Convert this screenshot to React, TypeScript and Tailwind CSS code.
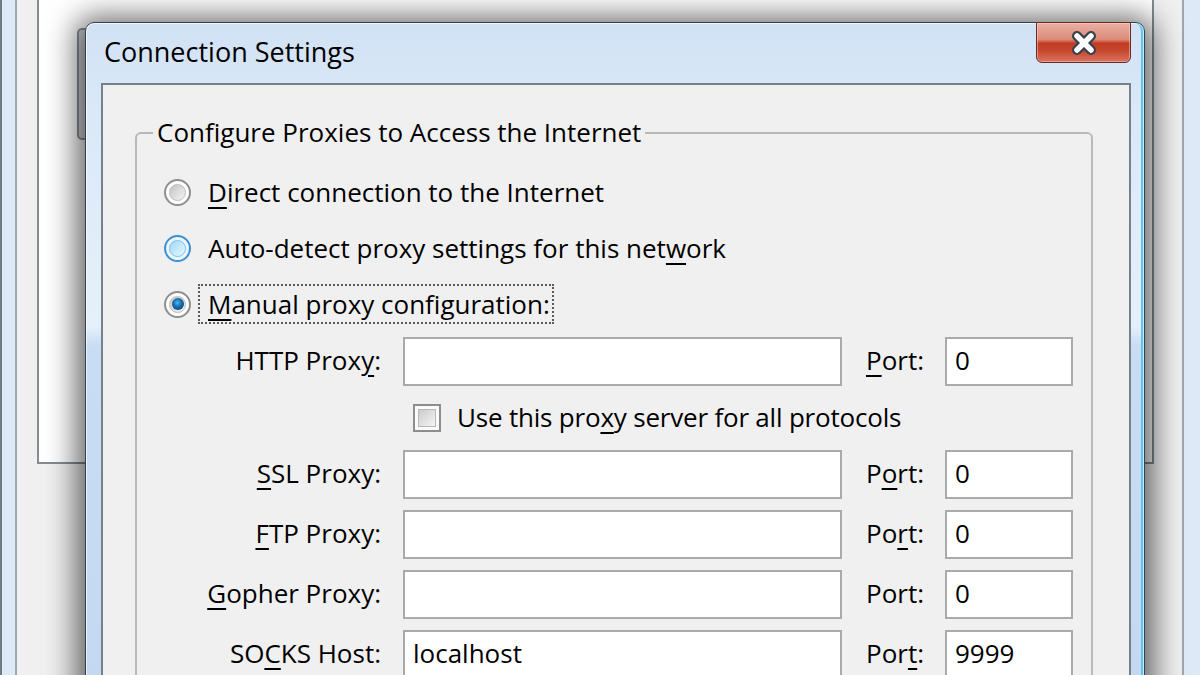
import React from "react";

function U({ children }: { children: React.ReactNode }) {
  return (
    <span className="underline decoration-[2px] underline-offset-[5px]">{children}</span>
  );
}

function Radio({ state }: { state: "off" | "hover" | "on" }) {
  const outer =
    state === "hover"
      ? "border-[#3d8fd0] bg-[#e8f6fe]"
      : "border-[#8e8e8e] bg-[#fdfdfd]";
  const inner =
    state === "hover"
      ? "bg-[linear-gradient(135deg,#9fd6f6_0%,#c9eafc_55%,#eef9ff_100%)] border-[#7cc0ea]"
      : "bg-[linear-gradient(135deg,#c2c2c2_0%,#dedede_55%,#f7f7f7_100%)] border-[#bcbcbc]";
  return (
    <div
      className={`w-[27px] h-[27px] shrink-0 rounded-full border-2 p-[3px] ${outer}`}
    >
      <div
        className={`w-full h-full rounded-full border flex items-center justify-center ${inner}`}
      >
        {state === "on" && (
          <div className="w-[12px] h-[12px] rounded-full bg-[radial-gradient(circle_at_45%_40%,#4ab8f0_0%,#1a6fae_40%,#07335a_100%)]" />
        )}
      </div>
    </div>
  );
}

function Checkbox() {
  return (
    <div className="w-[28px] h-[28px] shrink-0 border-2 border-[#8e8e8e] bg-[#fbfbfb] p-[3px]">
      <div className="w-full h-full border border-[#b8b8b8] bg-[linear-gradient(135deg,#cbcbcb_0%,#e0e0e0_50%,#f6f6f6_100%)]" />
    </div>
  );
}

function TextBox({ w, value }: { w: string; value?: string }) {
  return (
    <div
      className={`${w} h-[49px] shrink-0 border-2 border-[#aaaaaa] bg-white flex items-center px-[8px] pb-[4px] leading-none`}
    >
      {value}
    </div>
  );
}

function FieldRow({
  label,
  port,
  value,
  portValue,
  className = "",
}: {
  label: React.ReactNode;
  port: React.ReactNode;
  value?: string;
  portValue: string;
  className?: string;
}) {
  return (
    <div className={`flex items-center h-[49px] ${className}`}>
      <div className="w-[244px] shrink-0 text-right leading-none pb-[4px]">{label}</div>
      <div className="ml-[22px]">
        <TextBox w="w-[439px]" value={value} />
      </div>
      <div className="ml-[24px] w-[56px] shrink-0 leading-none pb-[4px]">{port}</div>
      <div className="ml-[23px]">
        <TextBox w="w-[128px]" value={portValue} />
      </div>
    </div>
  );
}

function RadioRow({
  state,
  focus,
  children,
}: {
  state: "off" | "hover" | "on";
  focus?: boolean;
  children: React.ReactNode;
}) {
  return (
    <div className="flex items-center h-[56px] pl-[27px]">
      <Radio state={state} />
      <div
        className={`ml-[7px] h-[40px] flex items-center pl-[8px] pr-[2px] border-2 border-dotted leading-none ${
          focus ? "border-[#5a5a5a]" : "border-transparent"
        }`}
      >
        {children}
      </div>
    </div>
  );
}

export default function App() {
  return (
    <div className="relative w-[1200px] h-[675px] overflow-hidden bg-[#f0f0f0] font-['Open_Sans',sans-serif] text-[26px] text-black">
      {/* background window */}
      <div className="flex h-full">
        <div className="w-[17px] h-full shrink-0 border-l-2 border-l-[#6f7983] border-r-2 border-r-[#9ea7b1] bg-[#dde9f6]" />
        <div className="flex-1 bg-[#f0f0f0] pl-[20px] pr-[28px]">
          <div className="h-[464px] border-2 border-t-0 border-[#858b92] bg-white" />
        </div>
        <div className="w-[18px] h-full shrink-0 border-l-2 border-l-[#9ea7b1] bg-[#dde9f6]" />
      </div>

      {/* small piece behind dialog */}
      <div className="absolute left-[77px] top-[28px] w-[14px] h-[112px] rounded-l-[5px] border-2 border-[#8d9298] bg-[#d3d7dc]" />

      {/* dialog */}
      <div className="absolute left-[85px] top-[22px] w-[1060px] h-[690px] rounded-t-[9px] border border-[#34404e] flex flex-col bg-[linear-gradient(180deg,#d1e2f5_0%,#dae8f7_12%,#e6f0fa_44%,#c8dcf3_47%,#c4d9f1_100%)] shadow-[0_4px_30px_9px_rgba(0,0,0,0.6),inset_0_0_0_1px_rgba(255,255,255,0.65),inset_-3px_0_0_0_#5cc6ee]">
        <div className="relative h-[60px] shrink-0 flex items-center pl-[18px] text-[27px] leading-none">
          <span className="-mt-[4px]">Connection Settings</span>
          <div className="absolute -top-[1px] right-[13px] w-[95px] h-[41px] rounded-b-[6px] border border-[#6a2b22] bg-[linear-gradient(180deg,#eab0a3_0%,#dc8b7a_42%,#c33c22_52%,#c6452d_70%,#d97460_100%)] shadow-[inset_0_0_0_1px_rgba(255,220,210,0.45)] flex items-center justify-center">
            <svg width="28" height="26" viewBox="0 0 28 26">
              <path d="M7 6 L21 20 M21 6 L7 20" stroke="#39414d" strokeWidth="10" strokeLinecap="round" fill="none" />
              <path d="M7 6 L21 20 M21 6 L7 20" stroke="#ffffff" strokeWidth="5.5" strokeLinecap="round" fill="none" />
            </svg>
          </div>
        </div>

        <div className="ml-[15px] mr-[13px] flex-1 border-2 border-[#75818d] bg-[#f0f0f0]">
          <fieldset className="mt-[30px] ml-[32px] mr-[36px] border-2 border-[#b9b9b9] rounded-[6px] pb-[20px]">
            <legend className="ml-[16px] px-[4px] leading-[34px] pb-[2px]">
              Configure Proxies to Access the Internet
            </legend>
            <div className="pt-[13px]">
              <RadioRow state="off">
                <span>
                  <U>D</U>irect connection to the Internet
                </span>
              </RadioRow>
              <RadioRow state="hover">
                <span>
                  Auto-detect proxy settings for this net<U>w</U>ork
                </span>
              </RadioRow>
              <RadioRow state="on" focus>
                <span>
                  <U>M</U>anual proxy configuration:
                </span>
              </RadioRow>

              <FieldRow
                className="mt-[5px]"
                label={
                  <span>
                    HTTP Prox<U>y</U>:
                  </span>
                }
                port={
                  <span>
                    <U>P</U>ort:
                  </span>
                }
                portValue="0"
              />
              <div className="flex items-center h-[64px] pl-[276px]">
                <Checkbox />
                <span className="ml-[16px] leading-none pb-[2px] tracking-[-0.2px]">
                  Use this pro<U>x</U>y server for all protocols
                </span>
              </div>
              <FieldRow
                label={
                  <span>
                    <U>S</U>SL Proxy:
                  </span>
                }
                port={
                  <span>
                    P<U>o</U>rt:
                  </span>
                }
                portValue="0"
              />
              <FieldRow
                className="mt-[11px]"
                label={
                  <span>
                    <U>F</U>TP Proxy:
                  </span>
                }
                port={
                  <span>
                    Po<U>r</U>t:
                  </span>
                }
                portValue="0"
              />
              <FieldRow
                className="mt-[11px]"
                label={
                  <span>
                    <U>G</U>opher Proxy:
                  </span>
                }
                port={<span>Port:</span>}
                portValue="0"
              />
              <FieldRow
                className="mt-[11px]"
                label={
                  <span>
                    SO<U>C</U>KS Host:
                  </span>
                }
                port={
                  <span>
                    Por<U>t</U>:
                  </span>
                }
                value="localhost"
                portValue="9999"
              />
            </div>
          </fieldset>
        </div>
      </div>
    </div>
  );
}
